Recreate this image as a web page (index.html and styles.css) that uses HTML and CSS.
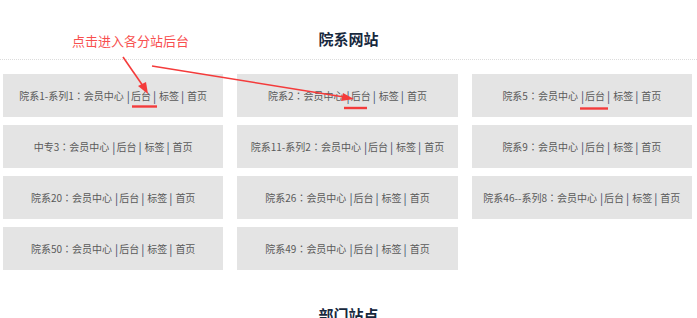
FILE: index.html
```html
<!DOCTYPE html>
<html lang="zh-CN">
<head>
<meta charset="utf-8">
<title>院系网站</title>
<link rel="stylesheet" href="styles.css">
</head>
<body>
<div class="page">
  <section class="sec">
    <div class="sec-head"><h2 class="sec-title">院系网站</h2></div>
    <div class="grid">
      <div class="card">院系1-系列1<span class="colon">：</span>会员中心<span class="sep sep-first">|</span>后台<span class="sep">|</span>标签<span class="sep">|</span>首页</div>
      <div class="card">院系2<span class="colon">：</span>会员中心<span class="sep sep-first">|</span>后台<span class="sep">|</span>标签<span class="sep">|</span>首页</div>
      <div class="card">院系5<span class="colon">：</span>会员中心<span class="sep sep-first">|</span>后台<span class="sep">|</span>标签<span class="sep">|</span>首页</div>
      <div class="card">中专3<span class="colon">：</span>会员中心<span class="sep sep-first">|</span>后台<span class="sep">|</span>标签<span class="sep">|</span>首页</div>
      <div class="card">院系11-系列2<span class="colon">：</span>会员中心<span class="sep sep-first">|</span>后台<span class="sep">|</span>标签<span class="sep">|</span>首页</div>
      <div class="card">院系9<span class="colon">：</span>会员中心<span class="sep sep-first">|</span>后台<span class="sep">|</span>标签<span class="sep">|</span>首页</div>
      <div class="card">院系20<span class="colon">：</span>会员中心<span class="sep sep-first">|</span>后台<span class="sep">|</span>标签<span class="sep">|</span>首页</div>
      <div class="card">院系26<span class="colon">：</span>会员中心<span class="sep sep-first">|</span>后台<span class="sep">|</span>标签<span class="sep">|</span>首页</div>
      <div class="card">院系46--系列8<span class="colon">：</span>会员中心<span class="sep sep-first">|</span>后台<span class="sep">|</span>标签<span class="sep">|</span>首页</div>
      <div class="card">院系50<span class="colon">：</span>会员中心<span class="sep sep-first">|</span>后台<span class="sep">|</span>标签<span class="sep">|</span>首页</div>
      <div class="card">院系49<span class="colon">：</span>会员中心<span class="sep sep-first">|</span>后台<span class="sep">|</span>标签<span class="sep">|</span>首页</div>
    </div>
  </section>
  <section class="sec sec-next">
    <div class="sec-head"><h2 class="sec-title">部门站点</h2></div>
  </section>

  <div class="note">点击进入各分站后台</div>
  <svg class="marks" width="697" height="318" viewBox="0 0 697 318">
    <g stroke="#f43b3b" stroke-width="1.6" fill="none">
      <line x1="123" y1="57" x2="143" y2="86"/>
      <line x1="152" y1="66" x2="344" y2="97"/>
    </g>
    <g fill="#f43b3b">
      <polygon points="148,94 138,86 146,82"/>
      <polygon points="354,99 343,93 341,101"/>
    </g>
    <g stroke="#f43b3b" stroke-width="2.4">
      <line x1="132" y1="106.5" x2="157" y2="106.5"/>
      <line x1="344" y1="108" x2="367" y2="108"/>
      <line x1="580" y1="108.5" x2="608" y2="108.5"/>
    </g>
  </svg>
</div>
</body>
</html>
```
FILE: styles.css
```css
html, body {
  margin: 0;
  padding: 0;
  background: #fff;
}
body {
  font-family: "Noto Sans CJK SC", "Microsoft YaHei", sans-serif;
  overflow: hidden;
}
.page {
  position: relative;
  width: 697px;
  height: 318px;
  overflow: hidden;
}
.sec-head {
  height: 60px;
  box-sizing: border-box;
  border-bottom: 1px dotted #dcdcdc;
  display: flex;
  justify-content: center;
  align-items: flex-end;
  padding-bottom: 11px;
}
.sec-title {
  margin: 0;
  font-size: 15px;
  line-height: 18px;
  font-weight: 700;
  color: #17283d;
}
.grid {
  display: grid;
  grid-template-columns: repeat(3, 1fr);
  column-gap: 14px;
  row-gap: 8px;
  padding: 14px 5px 0 3px;
}
.card {
  height: 43px;
  background: #e4e4e4;
  display: flex;
  align-items: center;
  justify-content: center;
  font-size: 10px;
  color: #5a5a5a;
  white-space: nowrap;
}
.colon {
  font-family: "Noto Sans CJK TC", sans-serif;
}
.sep {
  color: #3a4a66;
  font-size: 11.5px;
  margin: 0 3px 0 2px;
}
.sep-first {
  margin: 0 1px 0 3px;
}
.sec-next {
  margin-top: 6px;
}
.note {
  position: absolute;
  left: 72px;
  top: 32px;
  font-size: 13px;
  line-height: 17px;
  color: #f84f4f;
}
.marks {
  position: absolute;
  left: 0;
  top: 0;
  pointer-events: none;
}
```
